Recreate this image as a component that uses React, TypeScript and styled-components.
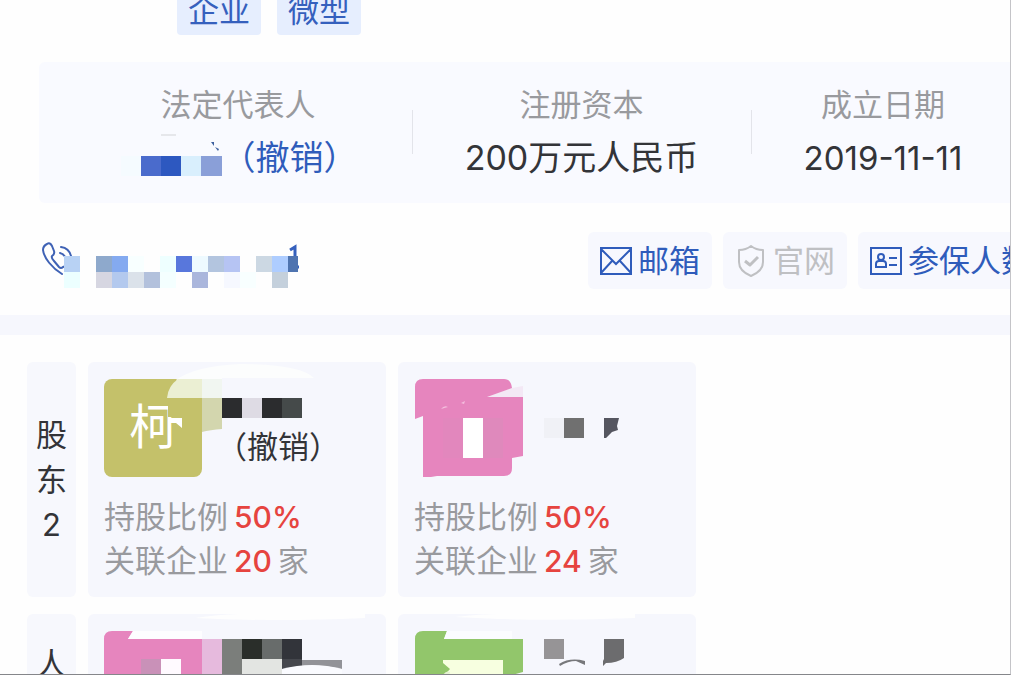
import React from "react";
import styled, { createGlobalStyle } from "styled-components";

const GlobalStyle = createGlobalStyle`
  * { box-sizing: border-box; }
  body {
    margin: 0;
    background: #fefefe;
    color: #333438;
    font-family: Inter, "Noto Sans CJK SC", sans-serif;
    font-size: 31px;
  }
`;

const Page = styled.main`
  height: 100vh;
  overflow: hidden;
  border-right: 1px solid #c4c4c8;
  border-bottom: 1px solid #85868a;
`;

const Tags = styled.div`
  display: flex;
  gap: 16px;
  margin-top: -13px;
  padding-left: 177px;
`;

const Tag = styled.span`
  padding: 0 11px;
  border-radius: 4px;
  background: #e6eefe;
  color: #3560bd;
  line-height: 48px;
`;

const Summary = styled.dl`
  display: grid;
  grid-template-columns: 348fr 339fr 264fr;
  margin: 27px -5px 0 39px;
  padding: 21px 0 21px 25px;
  border-radius: 6px 0 0 6px;
  background: #f9faff;
`;

const Fact = styled.div`
  position: relative;
  display: flex;
  flex-direction: column;
  align-items: center;
  gap: 7px;
  white-space: nowrap;

  & + &::before {
    content: "";
    position: absolute;
    left: 0;
    top: 27px;
    height: 44px;
    width: 1px;
    background: #e3e4ea;
  }
`;

const FactLabel = styled.dt`
  color: #999a9e;
  line-height: 44px;
`;

const FactValue = styled.dd<{ $link?: boolean }>`
  display: flex;
  margin: 0;
  color: ${(p) => (p.$link ? "#2f5cbb" : "#333438")};
  font-size: 34px;
  line-height: 48px;
`;

const DateText = styled.time`
  font-size: 33px;
`;

const Contact = styled.div`
  display: flex;
  justify-content: space-between;
  margin: 29px -34px 26px 42px;
`;

const PhoneLink = styled.a`
  display: block;
  height: 57px;
`;

const Actions = styled.div`
  display: flex;
  gap: 11px;
`;

const Action = styled.button`
  display: flex;
  align-items: center;
  gap: 6px;
  height: 57px;
  padding: 0 12px;
  border: 0;
  border-radius: 6px;
  background: #f7f8fe;
  color: #2f5cbb;
  font: inherit;
  line-height: 44px;
  white-space: nowrap;

  &:disabled { color: #bfc0c3; }
`;

const Band = styled.hr`
  height: 20px;
  margin: 0;
  border: 0;
  background: #f6f7fd;
`;

const Groups = styled.div`
  display: flex;
  flex-direction: column;
  gap: 17px;
  padding: 27px 27px 0;
`;

const Group = styled.section`
  display: flex;
  gap: 12px;
`;

const Side = styled.h2<{ $count: number }>`
  display: flex;
  flex-direction: column;
  align-items: center;
  width: 49px;
  height: 235px;
  margin: 0;
  padding-top: ${(p) => (p.$count === 3 ? 50 : 27)}px;
  border-radius: 6px;
  background: #f7f8fd;
  font-size: 31px;
  font-weight: 400;
  line-height: 45px;
`;

const Card = styled.article`
  position: relative;
  width: 298px;
  height: 235px;
  padding: 17px 16px 14px;
  border-radius: 6px;
  background: #f6f7fd;
`;

const Person = styled.div`
  display: flex;
  align-items: center;
  gap: 14px;
  height: 98px;
  margin-bottom: 18px;
`;

const Avatar = styled.div<{ $color: string }>`
  flex: none;
  width: 98px;
  height: 98px;
  border-radius: 8px;
  background: ${(p) => p.$color};
  color: #fff;
  font-size: 48px;
  line-height: 96px;
  text-align: center;
`;

const Status = styled.span`
  padding-top: 38px;
  line-height: 38px;
  white-space: nowrap;
`;

const Stat = styled.p`
  display: flex;
  gap: 6px;
  margin: 0;
  color: #999a9e;
  line-height: 44px;
  white-space: nowrap;
`;

const Red = styled.span`
  color: #e6443f;
  font-size: 30px;
  font-weight: 500;
`;

const Cover = styled.svg`
  position: absolute;
  inset: 0;
  width: 298px;
  height: 235px;
`;

type Tile = [number, number, number, number, string];

const Tiles = ({ items }: { items: Tile[] }) => (
  <g shapeRendering="crispEdges">
    {items.map(([x, y, w, h, fill], i) => (
      <rect key={i} x={x} y={y} width={w} height={h} fill={fill} />
    ))}
  </g>
);

const phoneTop: [number, string][] = [
  [64, "#b8d2f4"], [96, "#8ea9cc"], [112, "#84aaf0"], [128, "#f8ffff"], [160, "#eeffff"],
  [176, "#5877dc"], [192, "#eefaff"], [208, "#b3c5df"], [224, "#b6c4f3"], [256, "#ccd8e3"],
  [272, "#aecdff"],
];
const phoneBottom: [number, string][] = [
  [64, "#ecffff"], [96, "#d6d6e1"], [112, "#b3c9ee"], [128, "#dbe2ea"], [144, "#b3c1dc"],
  [160, "#f4ffff"], [192, "#aab6dc"], [224, "#f6f8ff"], [240, "#f8ffff"], [272, "#c4d0dc"],
];
const phoneTiles: Tile[] = [
  ...phoneTop.map(([x, c]): Tile => [x, 256, 16, 16, c]),
  ...phoneBottom.map(([x, c]): Tile => [x, 272, 16, 16, c]),
  [288, 256, 10, 16, "#4f74b0"],
];

const PhoneNumber = () => (
  <svg width="260" height="57" viewBox="42 232 260 57" aria-hidden="true">
    <g fill="none" stroke="#3f62b5" strokeWidth="2" strokeLinecap="round" strokeLinejoin="round">
      <path d="M62 274C52 268 44 258 43 250Q43 246 47 244Q50 242 52 246L54 251Q55 254 52 256Q51 258 54 261L59 267Q61 269 63 267L66 266" />
      <path d="M60 253Q65 254 66 260M61 247Q69 248 71 256" />
    </g>
    <path d="M290 250L295 247V268M292 267H299" fill="none" stroke="#3560bd" strokeWidth="3" />
    <Tiles items={phoneTiles} />
  </svg>
);

const HiddenName = () => (
  <svg width="103" height="48" viewBox="119 134 103 48" aria-hidden="true">
    <Tiles
      items={[
        [121, 156, 20, 20, "#f5fbff"], [141, 156, 20, 20, "#4a6bcc"], [161, 156, 20, 20, "#2d58c0"],
        [181, 156, 20, 20, "#d9effd"], [201, 156, 21, 20, "#8a9fd8"], [161, 134, 15, 2, "#e6e7eb"],
      ]}
    />
    <path d="M211 142l3 0 0 4zM215 147l4 2-1 2z" fill="#3c5f9e" />
  </svg>
);

const MailIcon = () => (
  <svg width="32" height="28" viewBox="0 0 32 28" fill="none" stroke="currentColor" strokeWidth="2" aria-hidden="true">
    <path d="M1 1H31V27H1ZM1 2L16 17L31 2M1 26L12 14M31 26L20 14" />
  </svg>
);

const ShieldIcon = () => (
  <svg width="32" height="34" viewBox="0 0 32 34" fill="none" stroke="currentColor" strokeWidth="2" strokeLinejoin="round" aria-hidden="true">
    <path d="M16 2Q21 6 28 6V18Q28 27 16 32Q4 27 4 18V6Q11 6 16 2Z" />
    <path d="M10 17L15 21L23 13" strokeWidth="3" />
  </svg>
);

const CardIcon = () => (
  <svg width="32" height="28" viewBox="0 0 32 28" fill="none" stroke="currentColor" strokeWidth="2" aria-hidden="true">
    <path d="M1 1H31V27H1ZM19 11H27M19 18H27" />
    <circle cx="11" cy="10" r="3" />
    <path d="M6 20V17Q6 14 9 14H13Q16 14 16 17V20Z" />
  </svg>
);

const Stats = ({ share, count }: { share: string; count: number }) => (
  <>
    <Stat>持股比例<Red>{share}</Red></Stat>
    <Stat>关联企业<Red>{count}</Red>家</Stat>
  </>
);

export default function App() {
  return (
    <Page>
      <GlobalStyle />
      <Tags>
        <Tag>企业</Tag>
        <Tag>微型</Tag>
      </Tags>
      <Summary>
        <Fact>
          <FactLabel>法定代表人</FactLabel>
          <FactValue $link><HiddenName />（撤销）</FactValue>
        </Fact>
        <Fact>
          <FactLabel>注册资本</FactLabel>
          <FactValue>200万元人民币</FactValue>
        </Fact>
        <Fact>
          <FactLabel>成立日期</FactLabel>
          <FactValue><DateText dateTime="2019-11-11">2019-11-11</DateText></FactValue>
        </Fact>
      </Summary>
      <Contact>
        <PhoneLink href="#phone" aria-label="电话"><PhoneNumber /></PhoneLink>
        <Actions>
          <Action><MailIcon /><span>邮箱</span></Action>
          <Action disabled><ShieldIcon /><span>官网</span></Action>
          <Action><CardIcon /><span>参保人数</span></Action>
        </Actions>
      </Contact>
      <Band />
      <Groups>
        <Group>
          <Side $count={3}><span>股</span><span>东</span><span>2</span></Side>
          <Card>
            <Person>
              <Avatar $color="#c4c16a">柯</Avatar>
              <Status>（撤销）</Status>
            </Person>
            <Stats share="50%" count={20} />
            <Cover viewBox="88 362 298 235" aria-hidden="true">
              <path d="M168 403H180V417H168Z" fill="#c4c16a" />
              <path d="M168 418H182V428L176 423H168Z" fill="#fff" />
              <path d="M176 380Q195 366 240 364Q300 364 314 378H222V398H202Z" fill="#fcfdfd" />
              <path d="M167 398Q168 386 178 379H202V398Z" fill="#ebefd3" />
              <path d="M202 379H222V398H202Z" fill="#f1f6f1" />
              <path d="M202 398H222V429Q210 430 202 432Z" fill="#d3d6ae" />
              <Tiles
                items={[
                  [222, 398, 20, 20, "#2b2c2e"], [242, 398, 20, 20, "#dedbe4"],
                  [262, 398, 20, 20, "#2b2c2e"], [282, 398, 20, 20, "#454a4a"],
                ]}
              />
            </Cover>
          </Card>
          <Card>
            <Person />
            <Stats share="50%" count={24} />
            <Cover viewBox="398 362 298 235" aria-hidden="true">
              <path d="M487 397L512 388L523 386V397Z" fill="#f3e8f5" />
              <path d="M415 387Q415 379 423 379H504Q511 379 512 388L487 397H523V456L512 458V468Q512 476 504 476H437L431 477H423V416L415 419Z" fill="#e685be" />
              <path d="M441 409Q444 405 448 407ZM461 403L465 401L464 404Z" fill="#f3bddd" />
              <Tiles
                items={[
                  [443, 418, 20, 40, "#e287bd"], [483, 418, 20, 40, "#df89bc"], [463, 418, 20, 40, "#ffffff"],
                  [544, 418, 20, 20, "#f0f1f6"], [564, 418, 20, 20, "#707070"],
                ]}
              />
              <path d="M604 418H619L617 426L618 430L612 432L606 438H604Z" fill="#555660" />
            </Cover>
          </Card>
        </Group>
        <Group>
          <Side $count={1}>人</Side>
          <Card>
            <Cover viewBox="88 614 298 235" aria-hidden="true">
              <path d="M195 618Q230 613 260 614H365V618Q270 622 195 618Z" fill="#fefefe" />
              <path d="M104 639Q104 631 112 631H133L128 639H202V729H104Z" fill="#e685be" />
              <path d="M133 631H202V639H128Z" fill="#fdfdff" />
              <Tiles
                items={[
                  [141, 659, 20, 20, "#c991b8"], [161, 659, 20, 20, "#fffaff"],
                  [202, 639, 20, 40, "#e6badd"], [222, 639, 20, 40, "#7b7e7b"],
                  [242, 639, 20, 20, "#2a2e2a"], [262, 639, 20, 20, "#686c6b"],
                  [282, 639, 20, 20, "#32343a"], [242, 659, 40, 20, "#e3e5e2"],
                ]}
              />
              <path d="M282 659H302V666L282 669Z" fill="#45474d" />
              <path d="M302 660H342V669Q322 664 302 666Z" fill="#929398" />
              <path d="M282 679V669Q312 661 342 669V679Z" fill="#fafbff" />
            </Cover>
          </Card>
          <Card>
            <Cover viewBox="398 614 298 235" aria-hidden="true">
              <path d="M455 617Q480 614 500 614H635V618Q540 622 455 617Z" fill="#fefefe" />
              <path d="M415 639Q415 631 423 631H447L444 639H523V672L512 675V729H415Z" fill="#92c66b" />
              <path d="M447 631H512V639H444Z" fill="#fbfcff" />
              <path d="M443 660H503V680H440L450 669L443 663Z" fill="#f7ffe0" />
              <path d="M443 675Q446 670 450 672L448 680H441Z" fill="#e5f2d2" />
              <Tiles items={[[544, 639, 20, 20, "#969496"]]} />
              <path d="M604 639H624V658Q617 663 606 663L603 666V661L604 659Z" fill="#6c6c6e" />
              <path d="M559 664Q570 657 585 661V665L576 661Q568 661 560 666Z" fill="#77787b" />
            </Cover>
          </Card>
        </Group>
      </Groups>
    </Page>
  );
}
